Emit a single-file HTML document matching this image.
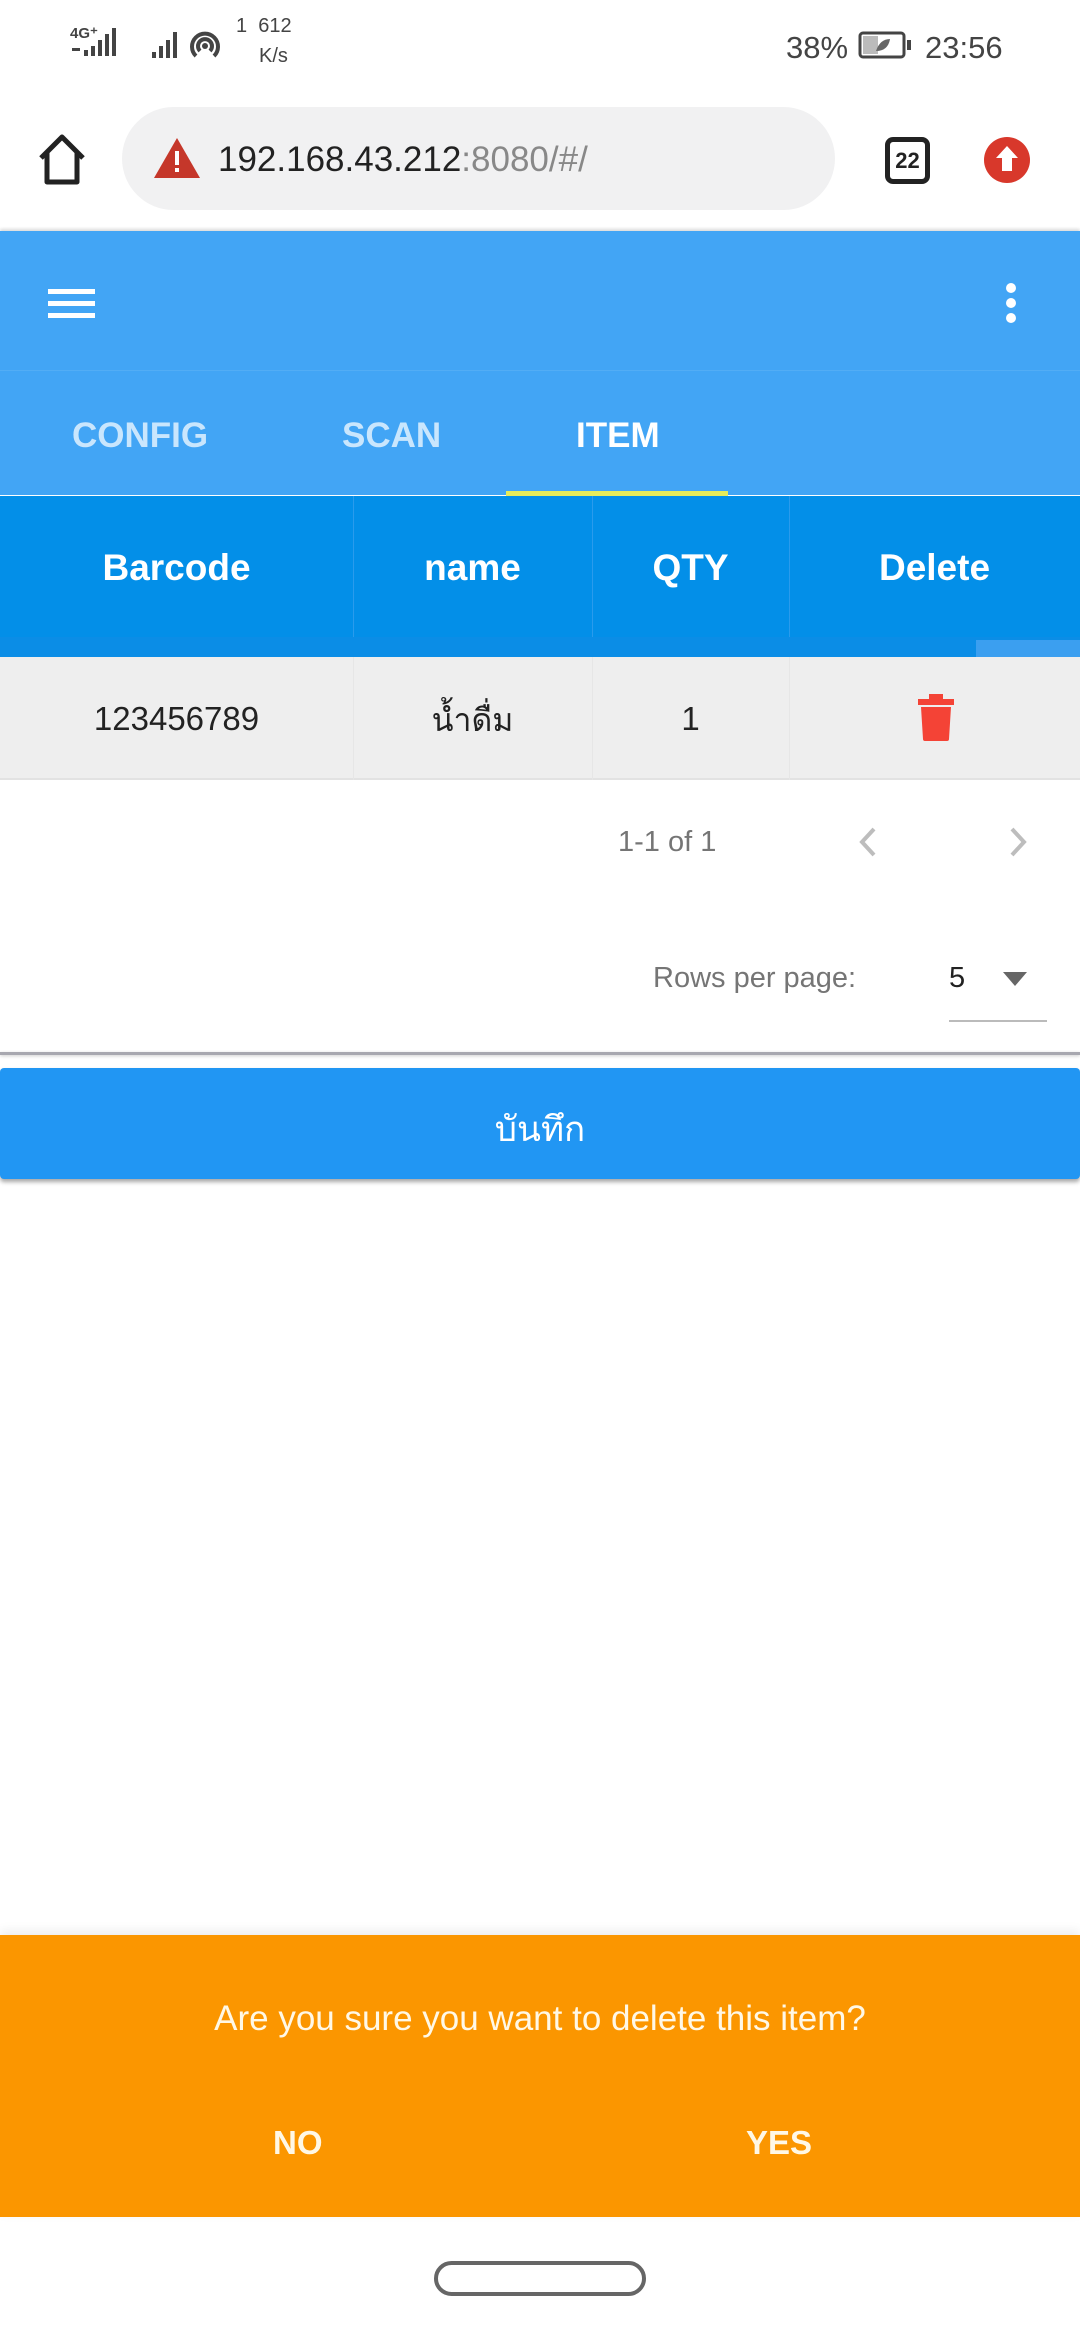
<!DOCTYPE html>
<html><head><meta charset="utf-8">
<style>
*{margin:0;padding:0;box-sizing:border-box}
body{width:1080px;height:2340px;background:#fff;font-family:"Liberation Sans","Noto Sans CJK SC",sans-serif;position:relative;overflow:hidden}
.a{position:absolute}
.t{position:absolute;white-space:nowrap;line-height:1}
</style></head><body>
<!-- status bar -->
<div class="t" style="left:70px;top:26px;font-size:15px;font-weight:bold;color:#444">4G⁺</div>
<svg class="a" style="left:70px;top:26px" width="60" height="36"><g fill="#444"><rect x="14" y="24" width="4" height="6"/><rect x="21" y="20" width="4" height="10"/><rect x="28" y="14" width="4" height="16"/><rect x="35" y="8" width="4" height="22"/><rect x="42" y="2" width="4" height="28"/><rect x="2" y="22" width="8" height="3"/></g></svg>
<svg class="a" style="left:150px;top:28px" width="90" height="36"><g fill="#444"><rect x="2" y="24" width="4" height="6"/><rect x="9" y="18" width="4" height="12"/><rect x="16" y="12" width="4" height="18"/><rect x="23" y="4" width="4" height="26"/></g><g fill="none" stroke="#444" stroke-width="4"><path d="M46 28a13 13 0 1 1 18 0"/><path d="M50 23a7 7 0 1 1 10 0"/></g><circle cx="55" cy="18" r="3" fill="#444"/></svg>
<div class="t" style="left:236px;top:16px;font-size:20px;color:#444">1&nbsp;&nbsp;612</div>
<div class="t" style="left:259px;top:46px;font-size:20px;color:#444">K/s</div>
<div class="t" style="left:786px;top:32px;font-size:31px;color:#444">38%</div>
<svg class="a" style="left:858px;top:31px" width="56" height="30"><rect x="2" y="2" width="44" height="24" rx="3" fill="none" stroke="#444" stroke-width="3"/><rect x="5" y="5" width="15" height="18" fill="#bbb"/><rect x="49" y="9" width="4" height="10" fill="#444"/><path d="M18 20q4-12 14-12q-2 12-14 12" fill="#666"/></svg>
<div class="t" style="left:925px;top:32px;font-size:31px;color:#444">23:56</div>
<!-- browser bar -->
<svg class="a" style="left:36px;top:132px" width="52" height="56"><path d="M5 26L26 5L47 26M11 20V50H41V20" fill="none" stroke="#222" stroke-width="5" stroke-linejoin="round"/></svg>
<div class="a" style="left:122px;top:107px;width:713px;height:103px;border-radius:52px;background:#f1f1f2"></div>
<svg class="a" style="left:152px;top:136px" width="50" height="44"><path d="M25 2L48 42H2Z" fill="#c5372a"/><rect x="23" y="15" width="4" height="14" fill="#fff"/><rect x="23" y="32" width="4" height="4" fill="#fff"/></svg>
<div class="t" style="left:218px;top:142px;font-size:35px;color:#222">192.168.43.212<span style="color:#888">:8080/#/</span></div>
<div class="a" style="left:885px;top:137px;width:45px;height:47px;border:5px solid #222;border-radius:8px;font-size:22px;font-weight:bold;text-align:center;line-height:37px;color:#222">22</div>
<svg class="a" style="left:984px;top:136px" width="46" height="48"><circle cx="23" cy="24" r="23" fill="#d8382b"/><path d="M23 10L34 22H28V35H18V22H12Z" fill="#fff"/></svg>
<!-- app bar -->
<div class="a" style="left:0;top:231px;width:1080px;height:264px;background:#42a5f5;box-shadow:0 -2px 3px rgba(0,0,0,.15)"></div>
<div class="a" style="left:0;top:370px;width:1080px;height:1px;background:#52adf5"></div>
<div class="a" style="left:48px;top:289px;width:47px;height:5px;background:#fff"></div>
<div class="a" style="left:48px;top:301px;width:47px;height:5px;background:#fff"></div>
<div class="a" style="left:48px;top:313px;width:47px;height:5px;background:#fff"></div>
<div class="a" style="left:1006px;top:283px;width:10px;height:10px;border-radius:5px;background:#fff"></div>
<div class="a" style="left:1006px;top:298px;width:10px;height:10px;border-radius:5px;background:#fff"></div>
<div class="a" style="left:1006px;top:313px;width:10px;height:10px;border-radius:5px;background:#fff"></div>
<div class="t" style="left:72px;top:418px;font-size:35px;font-weight:bold;color:#c9e6fd">CONFIG</div>
<div class="t" style="left:342px;top:418px;font-size:35px;font-weight:bold;color:#c9e6fd">SCAN</div>
<div class="t" style="left:576px;top:418px;font-size:35px;font-weight:bold;color:#fff">ITEM</div>
<div class="a" style="left:506px;top:491px;width:222px;height:5px;background:#e6ec5a"></div>
<!-- table header -->
<div class="a" style="left:0;top:496px;width:1080px;height:141px;background:#038fe8"></div>
<div class="a" style="left:0;top:637px;width:1080px;height:20px;background:#0b8de6"></div>
<div class="a" style="left:976px;top:640px;width:104px;height:17px;background:#3b9ff0"></div>
<div class="a" style="left:353px;top:496px;width:1px;height:141px;background:#2a9bec"></div>
<div class="a" style="left:592px;top:496px;width:1px;height:141px;background:#2a9bec"></div>
<div class="a" style="left:789px;top:496px;width:1px;height:141px;background:#2a9bec"></div>
<div class="t" style="left:0;width:353px;text-align:center;top:549px;font-size:37px;font-weight:bold;color:#fff">Barcode</div>
<div class="t" style="left:353px;width:239px;text-align:center;top:549px;font-size:37px;font-weight:bold;color:#fff">name</div>
<div class="t" style="left:592px;width:197px;text-align:center;top:549px;font-size:37px;font-weight:bold;color:#fff">QTY</div>
<div class="t" style="left:789px;width:291px;text-align:center;top:549px;font-size:37px;font-weight:bold;color:#fff">Delete</div>
<!-- row -->
<div class="a" style="left:0;top:657px;width:1080px;height:123px;background:#eeeeee;border-bottom:2px solid #e2e2e2"></div>
<div class="a" style="left:353px;top:657px;width:1px;height:123px;background:#e6e6e6"></div>
<div class="a" style="left:592px;top:657px;width:1px;height:123px;background:#e6e6e6"></div>
<div class="a" style="left:789px;top:657px;width:1px;height:123px;background:#e6e6e6"></div>
<div class="t" style="left:0;width:353px;text-align:center;top:702px;font-size:33px;color:#222">123456789</div>
<div class="t" style="left:353px;width:239px;text-align:center;top:704px;font-size:32px;color:#222;font-family:'Liberation Sans','Noto Sans CJK SC','DejaVu Sans',sans-serif">น้ำดื่ม</div>
<div class="t" style="left:592px;width:197px;text-align:center;top:702px;font-size:33px;color:#222">1</div>
<svg class="a" style="left:918px;top:694px" width="36" height="48"><rect x="0" y="5" width="36" height="6" fill="#f44336"/><rect x="11" y="0" width="14" height="6" fill="#f44336"/><path d="M3 13H33L31 45Q31 47 29 47H7Q5 47 5 45Z" fill="#f44336"/></svg>
<!-- pagination -->
<div class="t" style="left:618px;top:828px;font-size:29px;color:#757575">1-1 of 1</div>
<svg class="a" style="left:856px;top:826px" width="24" height="32"><path d="M18 3L6 16L18 29" fill="none" stroke="#bdbdbd" stroke-width="4"/></svg>
<svg class="a" style="left:1006px;top:826px" width="24" height="32"><path d="M6 3L18 16L6 29" fill="none" stroke="#bdbdbd" stroke-width="4"/></svg>
<div class="t" style="left:653px;top:964px;font-size:29px;color:#757575">Rows per page:</div>
<div class="t" style="left:949px;top:964px;font-size:29px;color:#222">5</div>
<svg class="a" style="left:1002px;top:971px" width="26" height="16"><path d="M1 1H25L13 15Z" fill="#666"/></svg>
<div class="a" style="left:949px;top:1020px;width:98px;height:2px;background:#bbb"></div>
<div class="a" style="left:0;top:1052px;width:1080px;height:3px;background:#a8a8b0;box-shadow:0 1px 3px rgba(0,0,0,.2)"></div>
<!-- button -->
<div class="a" style="left:0;top:1068px;width:1080px;height:111px;background:#2196f3;border-radius:4px;box-shadow:0 3px 4px rgba(0,0,0,.35)"></div>
<div class="t" style="left:0;width:1080px;text-align:center;top:1112px;font-size:35px;color:#fff;font-family:'Liberation Sans','Noto Sans CJK SC','DejaVu Sans',sans-serif">บันทึก</div>
<!-- snackbar -->
<div class="a" style="left:0;top:1935px;width:1080px;height:282px;background:#fb9600;box-shadow:0 -4px 10px rgba(0,0,0,.08)"></div>
<div class="t" style="left:0;width:1080px;text-align:center;top:2001px;font-size:35px;color:#fff8e6">Are you sure you want to delete this item?</div>
<div class="t" style="left:273px;top:2126px;font-size:33px;font-weight:bold;color:#fff8e6">NO</div>
<div class="t" style="left:746px;top:2126px;font-size:33px;font-weight:bold;color:#fff8e6">YES</div>
<!-- nav -->
<div class="a" style="left:434px;top:2261px;width:212px;height:35px;border:4px solid #666;border-radius:18px"></div>
</body></html>
